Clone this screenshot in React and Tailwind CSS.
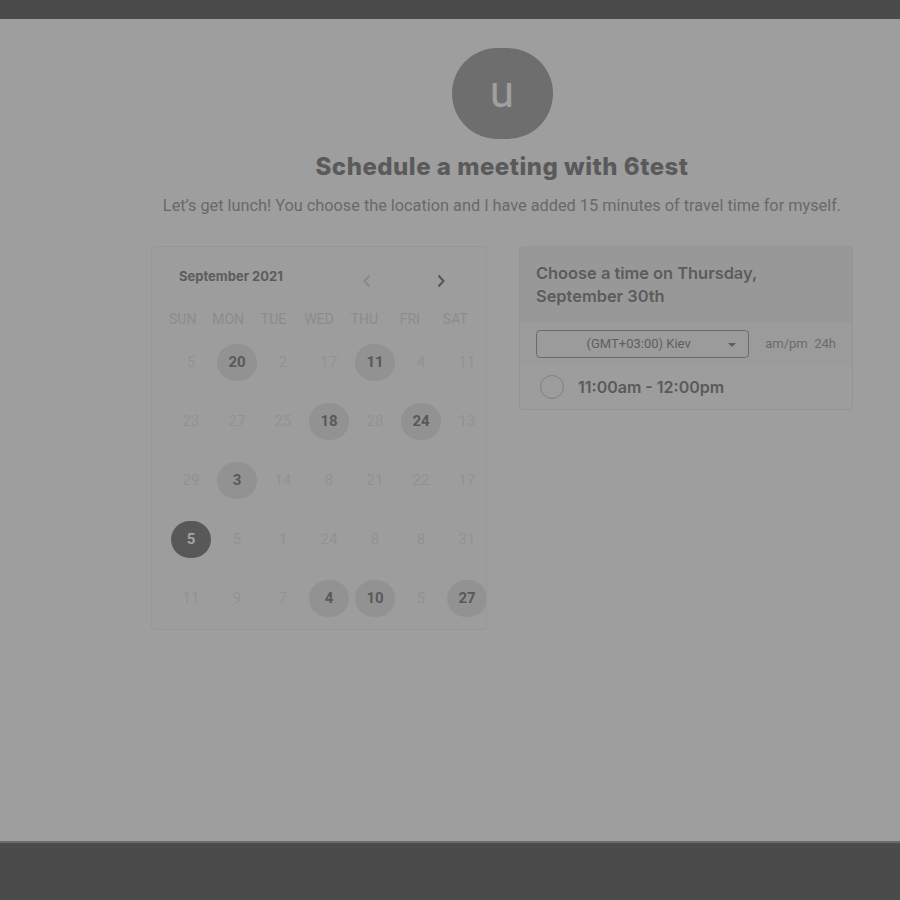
import { useState } from "react";

const weekDays = ["SUN", "MON", "TUE", "WED", "THU", "FRI", "SAT"];

// each cell: [day, available]
const weeks = [
  [[5], [20, true], [2], [17], [11, true], [4], [11]],
  [[23], [27], [25], [18, true], [28], [24, true], [13]],
  [[29], [3, true], [14], [8], [21], [22], [17]],
  [[5, "selected"], [5], [1], [24], [8], [8], [31]],
  [[11], [9], [7], [4, true], [10, true], [5], [27, true]],
];

const Chevron = ({ dir, className }) => (
  <svg width="10" height="14" viewBox="0 0 10 14" className={className}>
    <path
      d={dir === "left" ? "M7.5 1.5 L2.5 7 L7.5 12.5" : "M2.5 1.5 L7.5 7 L2.5 12.5"}
      fill="none"
      stroke="currentColor"
      strokeWidth="2"
    />
  </svg>
);

const DayCell = ({ day, state }) => {
  if (state === "selected") {
    return (
      <div className="flex h-[59px] items-center justify-center">
        <div className="flex h-[37px] w-10 items-center justify-center rounded-full bg-[#585858] text-[15px] font-bold text-[#a3a3a3]">
          {day}
        </div>
      </div>
    );
  }
  if (state) {
    return (
      <div className="flex h-[59px] items-center justify-center">
        <div className="flex h-[37px] w-10 items-center justify-center rounded-full bg-[#929292] text-[15px] font-bold text-[#595959]">
          {day}
        </div>
      </div>
    );
  }
  return (
    <div className="flex h-[59px] items-center justify-center text-[15px] text-[#929292]">
      {day}
    </div>
  );
};

const Calendar = () => (
  <div className="h-[384px] w-[336px] shrink-0 overflow-hidden rounded-sm border border-[#979797] bg-[#9d9d9d]">
    <div className="flex h-[60px] items-center pl-[27px]">
      <span className="font-['Inter'] text-[13px] font-bold text-[#5c5c5c]">September 2021</span>
      <Chevron dir="left" className="ml-[79px] mt-2 text-[#8a8a8a]" />
      <Chevron dir="right" className="ml-[64px] mt-2 text-[#555555]" />
    </div>
    <div className="grid h-[24px] grid-cols-7 px-2">
      {weekDays.map((d) => (
        <div key={d} className="flex items-center justify-center text-[14px] text-[#8c8c8c]">
          {d}
        </div>
      ))}
    </div>
    <div className="mt-[2px] grid w-[338px] grid-cols-7 pl-4">
      {weeks.flat().map(([day, state], i) => (
        <DayCell key={i} day={day} state={state} />
      ))}
    </div>
  </div>
);

const TimePicker = () => {
  const [format] = useState("am/pm");
  return (
    <div className="w-[334px] self-start rounded-sm border border-[#959595] bg-[#9d9d9d]">
      <div className="flex h-[75px] flex-col justify-center border-b border-[#969696] bg-[#989898] px-4 pt-[2px]">
        <p className="font-['Inter'] text-[16.4px] font-semibold leading-[23px] text-[#5c5c5c]">
          Choose a time on Thursday,
          <br />
          September 30th
        </p>
      </div>
      <div className="flex h-[42px] items-center border-b border-[#999999] bg-[#9b9b9b] pl-4 pr-4 pt-[2px]">
        <div className="relative flex h-[28px] w-[214px] items-center justify-center rounded-sm border border-[#6b6b6b] text-[13px] text-[#5e5e5e]">
          <span className="pr-2">(GMT+03:00) Kiev</span>
          <span className="absolute right-[12px] top-[12px] h-0 w-0 border-x-[4px] border-t-[4px] border-x-transparent border-t-[#5e5e5e]" />
        </div>
        <span className="ml-[16px] text-[13px] text-[#6b6b6b]">
          {format}&nbsp;&nbsp;24h
        </span>
      </div>
      <div className="flex h-[45px] items-center pl-5">
        <span className="h-6 w-6 rounded-full border-[1.5px] border-[#808080]" />
        <span className="ml-[14px] font-['Inter'] text-[16px] font-semibold text-[#5a5a5a]">
          11:00am - 12:00pm
        </span>
      </div>
    </div>
  );
};

export default function App() {
  return (
    <div className="flex min-h-[900px] flex-col bg-[#4b4b4b] font-['Roboto',sans-serif]">
      <div className="h-[19px] bg-[#4b4b4b]" />
      <main className="h-[822px] bg-[#9e9e9e]">
        <div className="ml-[151px] w-[702px] pt-[29px]">
          <div className="flex justify-center">
            <div className="flex h-[91px] w-[101px] items-center justify-center rounded-full bg-[#6e6e6e] pb-1 text-[44px] text-[#a0a0a0]">
              u
            </div>
          </div>
          <h1 className="mt-[13px] text-center font-['Inter'] text-[24px] font-extrabold leading-[30px] tracking-[0.5px] text-[#5a5a5a]">
            Schedule a meeting with 6test
          </h1>
          <p className="mt-[14px] whitespace-nowrap text-center text-[16.3px] leading-[20px] text-[#696969]">
            Let’s get lunch! You choose the location and I have added 15 minutes of travel time for myself.
          </p>
          <div className="mt-[30px] flex gap-[32px]">
            <Calendar />
            <TimePicker />
          </div>
        </div>
      </main>
      <footer className="flex-1 border-t-2 border-[#6b6b6b] bg-[#4b4b4b]" />
    </div>
  );
}
